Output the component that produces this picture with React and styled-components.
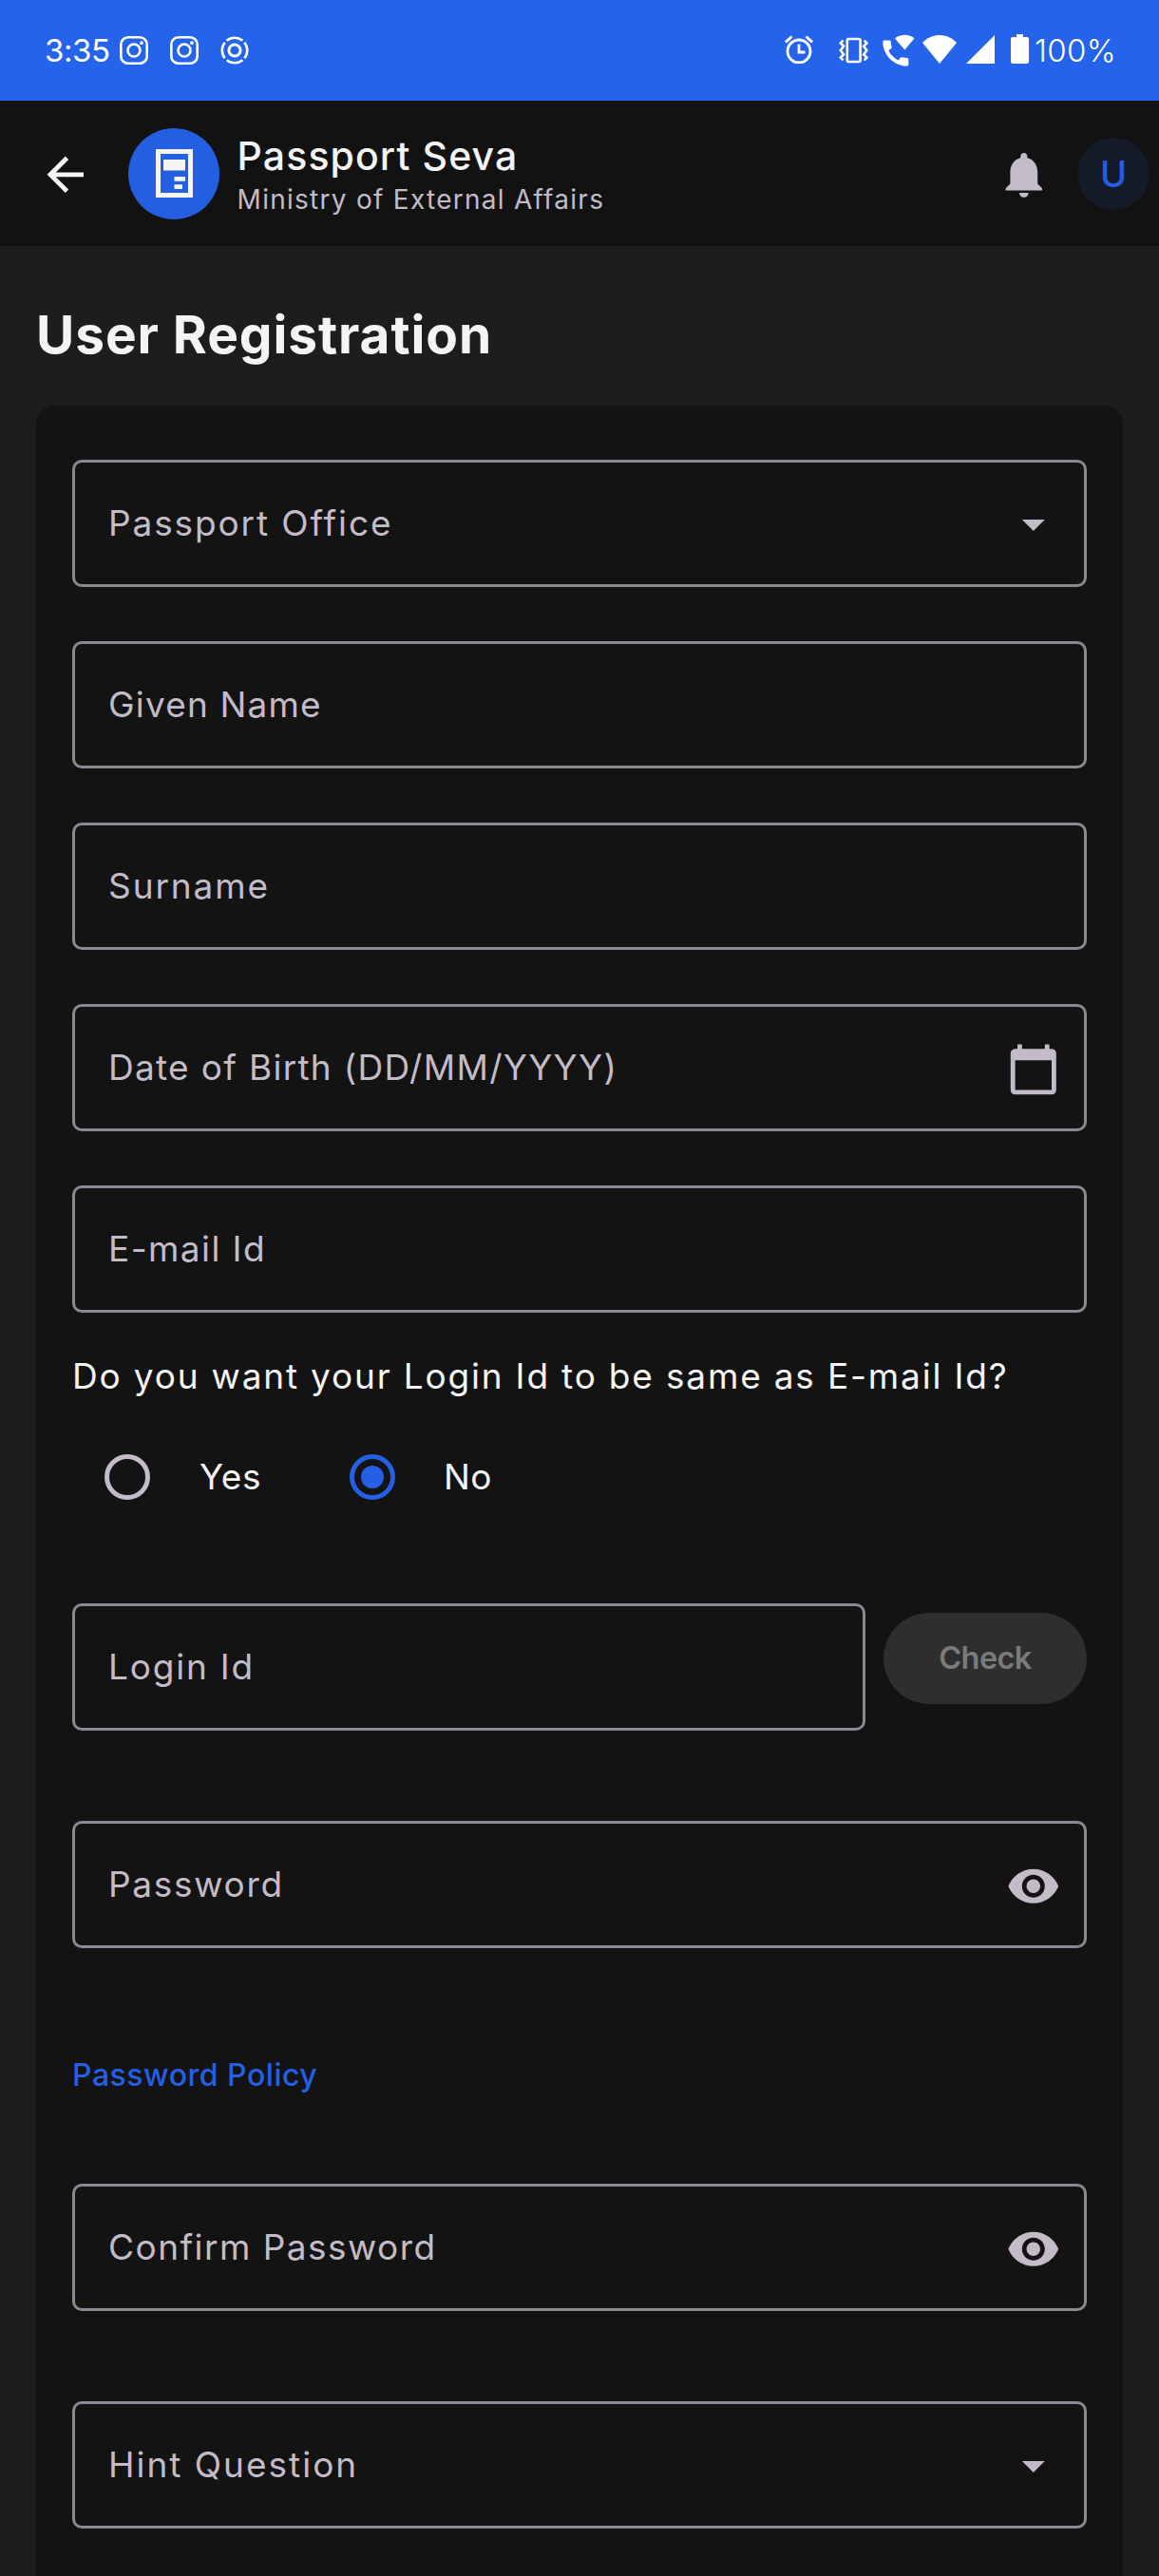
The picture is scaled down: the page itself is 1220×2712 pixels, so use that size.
import React from 'react';
import styled, { createGlobalStyle } from 'styled-components';

const Global = createGlobalStyle`
  *, *::before, *::after { box-sizing: border-box; }
  body { margin: 0; background: #1c1d1f; overflow: hidden; }
`;

const Screen = styled.div`
  width: 1220px;
  height: 2712px;
  overflow: hidden;
  display: flex;
  flex-direction: column;
  background: #1c1d1f;
  color: #f4f4f4;
  font-family: Inter, 'Noto Sans', sans-serif;
  white-space: nowrap;
`;

const Text = styled.span`
  font-size: ${(p) => p.$size || 37}px;
  font-weight: ${(p) => p.$weight || 400};
  line-height: ${(p) => p.$line || 56}px;
  letter-spacing: ${(p) => p.$track || 0}px;
  color: ${(p) => p.$color || '#f4f4f4'};
`;

const Icon = styled.svg`
  display: block;
  flex: none;
  width: ${(p) => p.$w || 57.6}px;
  height: ${(p) => p.$h || p.$w || 57.6}px;
  margin-left: ${(p) => p.$ml || 0}px;
  margin-top: ${(p) => p.$mt || 0}px;
  color: ${(p) => p.$color || '#c3bcc8'};
  fill: currentColor;
`;

/* Status bar */
const StatusBar = styled.div`
  height: 106px;
  flex: none;
  display: flex;
  align-items: center;
  justify-content: space-between;
  padding: 0 46px 0 47px;
  background: #2563eb;
`;
const StatusGroup = styled.div`
  display: flex;
  align-items: center;
`;
const Clock = styled(Text)`
  width: 79px;
`;
const Battery = styled(Text)`
  width: 85px;
  margin-left: 6px;
`;

/* App bar */
const AppBar = styled.header`
  height: 153px;
  flex: none;
  display: flex;
  align-items: center;
  padding: 0 10px 0 40px;
  background: #121212;
`;
const Logo = styled.div`
  width: 96px;
  height: 96px;
  margin-left: 37px;
  border-radius: 50%;
  background: #255fe1;
  display: flex;
  align-items: center;
  justify-content: center;
`;
const Brand = styled.div`
  flex: 1;
  display: flex;
  flex-direction: column;
  gap: 2px;
  padding-top: 3px;
  margin-left: 19px;
`;
const Avatar = styled.div`
  width: 76px;
  height: 76px;
  margin-left: 27px;
  border-radius: 50%;
  background: #151b28;
  display: flex;
  align-items: center;
  justify-content: center;
`;

/* Form */
const Title = styled.h1`
  margin: 0;
  padding: 60px 38px 42px;
  font-size: 55px;
  font-weight: 700;
  line-height: 66px;
  letter-spacing: 0.91px;
`;
const Card = styled.main`
  flex: 1;
  margin: 0 38px;
  padding: 57px 38px 0;
  border-radius: 19px 19px 0 0;
  background: #131313;
  display: flex;
  flex-direction: column;
`;
const FieldBox = styled.div`
  height: 134px;
  flex: ${(p) => (p.$grow ? '1' : 'none')};
  margin-top: ${(p) => p.$top || 0}px;
  padding: 0 24px 0 35px;
  border: 3px solid #868a91;
  border-radius: 10px;
  display: flex;
  align-items: center;
  justify-content: space-between;
`;
const Stack = styled.div`
  display: flex;
  flex-direction: column;
  gap: 57px;
`;
const Question = styled(Text)`
  margin-top: 39px;
`;
const Radios = styled.div`
  height: 96px;
  margin-top: 30px;
  padding-left: 34px;
  display: flex;
  align-items: center;
`;
const Option = styled.label`
  display: flex;
  align-items: center;
  gap: ${(p) => p.$gap}px;
  width: 258px;
`;
const Ring = styled.span`
  width: 48px;
  height: 48px;
  border: 5px solid ${(p) => (p.$on ? '#255fe5' : '#c3bcc8')};
  border-radius: 50%;
  display: flex;
  align-items: center;
  justify-content: center;
`;
const Dot = styled.span`
  width: 24px;
  height: 24px;
  border-radius: 50%;
  background: #255fe5;
`;
const LoginRow = styled.div`
  display: flex;
  margin-top: 85px;
  gap: 19px;
`;
const CheckButton = styled.button`
  width: 214px;
  height: 96px;
  margin: 10px 0 0;
  padding: 0;
  border: 0;
  border-radius: 48px;
  background: #2e2e2e;
  color: #7b7b7b;
  font: 600 32.5px/40px Inter, sans-serif;
  letter-spacing: -0.6px;
`;
const PolicyLink = styled(Text)`
  margin-top: 110px;
`;

const Caret = () => (
  <Icon viewBox="0 0 24 24" $mt={1}><path d="M7 10l5 5 5-5z" /></Icon>
);
const Calendar = () => (
  <Icon viewBox="0 0 24 24" $mt={3}>
    <path d="M20 3h-1V1h-2v2H7V1H5v2H4c-1.1 0-2 .9-2 2v16c0 1.1.9 2 2 2h16c1.1 0 2-.9 2-2V5c0-1.1-.9-2-2-2zm0 18H4V8h16v13z" />
  </Icon>
);
const Eye = () => (
  <Icon viewBox="0 0 24 24" $mt={3}>
    <path d="M12 4.5C7 4.5 2.73 7.61 1 12c1.73 4.39 6 7.5 11 7.5s9.27-3.11 11-7.5c-1.73-4.39-6-7.5-11-7.5zM12 17c-2.76 0-5-2.24-5-5s2.24-5 5-5 5 2.24 5 5-2.24 5-5 5zm0-8c-1.66 0-3 1.34-3 3s1.34 3 3 3 3-1.34 3-3-1.34-3-3-3z" />
  </Icon>
);
const Instagram = ({ ml }) => (
  <Icon viewBox="0 0 30 30" $w={30} $ml={ml} $color="#fff">
    <rect x="1.3" y="1.3" width="27.4" height="27.4" rx="7.5" fill="none" stroke="currentColor" strokeWidth="2.6" />
    <circle cx="15" cy="15" r="6.5" fill="none" stroke="currentColor" strokeWidth="2.6" />
    <circle cx="23" cy="7.2" r="1.9" />
  </Icon>
);
const Target = () => (
  <Icon viewBox="0 0 30 30" $w={30} $ml={23} $color="#fff">
    <g fill="none" stroke="currentColor">
      <circle cx="15" cy="15" r="6.1" strokeWidth="3" />
      <path d="M6.7 4.7A13.2 13.2 0 0 1 23.3 4.7M25.3 6.7A13.2 13.2 0 0 1 25.3 23.3M23.3 25.3A13.2 13.2 0 0 1 6.7 25.3M4.7 23.3A13.2 13.2 0 0 1 4.7 6.7" strokeWidth="2.6" />
    </g>
  </Icon>
);
const Alarm = () => (
  <Icon viewBox="0 0 30 30" $w={30} $color="#fff" $mt={-2}>
    <g fill="none" stroke="currentColor">
      <circle cx="15" cy="17" r="12" strokeWidth="2.8" />
      <path d="M15 9.5V18H21.5" strokeWidth="2.8" />
      <path d="M1 7.3L7.5 1.5M22.5 1.5L29 7.3" strokeWidth="3" />
    </g>
  </Icon>
);
const Vibrate = () => (
  <Icon viewBox="0 0 31 28" $w={31} $h={28} $ml={27} $color="#fff" $mt={-1}>
    <g fill="none" stroke="currentColor" strokeWidth="2.6">
      <rect x="8.8" y="2" width="13.8" height="24" rx="1.5" />
      <path d="M4.5 3.5L1.8 6.5 5 9.7 1.8 14 5 18.3 1.8 21.5 4.5 24.5M26.7 3.5L29.4 6.5 26.2 9.7 29.4 14 26.2 18.3 29.4 21.5 26.7 24.5" />
    </g>
  </Icon>
);
const WifiCall = () => (
  <Icon viewBox="0 0 34 34" $w={34} $ml={15} $color="#fff">
    <g transform="translate(-4.2 2) scale(1.5)">
      <path d="M20.01 15.38c-1.23 0-2.42-.2-3.53-.56-.35-.12-.74-.03-1.01.24l-1.57 1.97c-2.83-1.35-5.48-3.9-6.89-6.83l1.95-1.66c.27-.28.35-.67.24-1.02-.37-1.11-.56-2.3-.56-3.53 0-.54-.45-.99-.99-.99H4.19C3.65 3 3 3.24 3 3.99 3 13.28 10.73 21 20.01 21c.71 0 .99-.63.99-1.18v-3.45c0-.54-.45-.99-.99-.99z" />
    </g>
    <path d="M13 4.5C18.5-.5 28.5-.5 33.5 4.5L23.3 16.5z" />
  </Icon>
);
const Wifi = () => (
  <Icon viewBox="0 0 36 30" $w={36} $h={30} $ml={8} $color="#fff" $mt={-2}>
    <path d="M0 8C10-2.7 26-2.7 36 8L18 30z" />
  </Icon>
);
const Signal = () => (
  <Icon viewBox="0 0 30 30" $w={30} $ml={10} $color="#fff" $mt={-2}><path d="M0 30H30V0z" /></Icon>
);
const BatteryIcon = () => (
  <Icon viewBox="0 0 19 31" $w={19} $h={31} $ml={17} $color="#fff" $mt={-3}>
    <path d="M6 0h7v3h4a2 2 0 0 1 2 2v24a2 2 0 0 1-2 2H2a2 2 0 0 1-2-2V5a2 2 0 0 1 2-2h4z" />
  </Icon>
);

const Field = ({ label, track, top, grow, children }) => (
  <FieldBox $top={top} $grow={grow}>
    <Text $track={track} $color="#c3bcc8">{label}</Text>
    {children}
  </FieldBox>
);

export default function App() {
  return (
    <Screen>
      <Global />
      <StatusBar>
        <StatusGroup>
          <Clock $size={33} $line={40} $track={-0.42} $color="#fff">3:35</Clock>
          <Instagram />
          <Instagram ml={23} />
          <Target />
        </StatusGroup>
        <StatusGroup>
          <Alarm />
          <Vibrate />
          <WifiCall />
          <Wifi />
          <Signal />
          <BatteryIcon />
          <Battery $size={33} $line={40} $weight={300} $track={0.3} $color="#fff">100%</Battery>
        </StatusGroup>
      </StatusBar>

      <AppBar>
        <Icon viewBox="0 0 24 24" $color="#f4f4f4" $mt={2}>
          <path d="M20 11H7.83l5.59-5.59L12 4l-8 8 8 8 1.41-1.41L7.83 13H20v-2z" />
        </Icon>
        <Logo>
          <Icon viewBox="0 0 39 51" $w={39} $h={51} $color="#f4f4f4" $ml={1}>
            <path fillRule="evenodd" d="M0 0h39v51H0zM5 5v41h29V5z" />
            <path d="M8 11h23v11.5H8zM19.5 29H31v4.8H19.5zM19.5 37.3H28V42H19.5z" />
          </Icon>
        </Logo>
        <Brand>
          <Text $size={41} $line={50} $weight={500} $track={1.1}>Passport Seva</Text>
          <Text $size={28} $line={38} $track={1.27} $color="#c3bcc8">Ministry of External Affairs</Text>
        </Brand>
        <Icon viewBox="0 0 24 24" $mt={2}>
          <path d="M12 22c1.1 0 2-.9 2-2h-4c0 1.1.89 2 2 2zm6-6v-5c0-3.07-1.64-5.64-4.5-6.32V4c0-.83-.67-1.5-1.5-1.5s-1.5.67-1.5 1.5v.68C7.63 5.36 6 7.92 6 11v5l-2 2v1h16v-1l-2-2z" />
        </Icon>
        <Avatar><Text $size={38} $weight={500} $line={44} $color="#255fe1">U</Text></Avatar>
      </AppBar>

      <Title>User Registration</Title>

      <Card>
        <Stack>
          <Field label="Passport Office" track={1.88}><Caret /></Field>
          <Field label="Given Name" track={1.17} />
          <Field label="Surname" track={1.9} />
          <Field label="Date of Birth (DD/MM/YYYY)" track={1.3}><Calendar /></Field>
          <Field label="E-mail Id" track={1.4} />
        </Stack>

        <Question $track={1.82}>Do you want your Login Id to be same as E-mail Id?</Question>
        <Radios>
          <Option $gap={52}><Ring /><Text $track={0.58}>Yes</Text></Option>
          <Option $gap={51}><Ring $on><Dot /></Ring><Text $track={0.4}>No</Text></Option>
        </Radios>

        <LoginRow>
          <Field label="Login Id" track={1.8} grow />
          <CheckButton disabled>Check</CheckButton>
        </LoginRow>

        <Field label="Password" track={1.7} top={95}><Eye /></Field>
        <PolicyLink $size={32} $line={48} $weight={500} $track={0.52} $color="#255fe5">Password Policy</PolicyLink>
        <Field label="Confirm Password" track={1.46} top={90}><Eye /></Field>
        <Field label="Hint Question" track={2} top={95}><Caret /></Field>
      </Card>
    </Screen>
  );
}
